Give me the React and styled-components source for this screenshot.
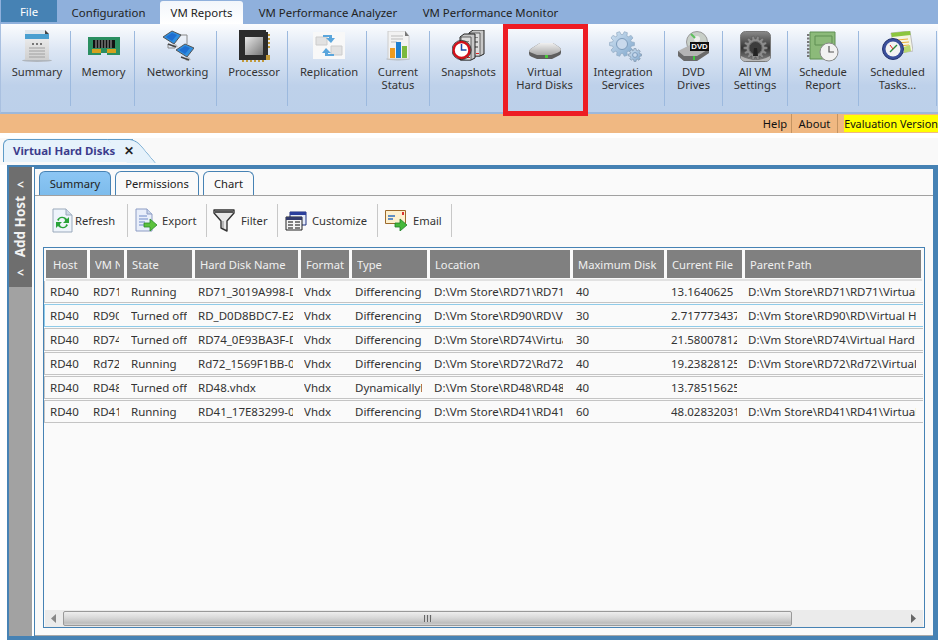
import React from 'react';
import styled, { createGlobalStyle } from 'styled-components';

const Global = createGlobalStyle`
  html, body { margin: 0; padding: 0; background: #fff; }
  * { box-sizing: border-box; }
  body { font-family: "Noto Sans", "Open Sans", "Liberation Sans", sans-serif; font-size: 11.5px; color: #333; }
`;

const Page = styled.div`
  width: 938px; height: 640px; overflow: hidden; display: flex; flex-direction: column; background: #fff;
`;
const MenuBar = styled.div`
  height: 24px; flex: none; background: #8fb0dc; display: flex; align-items: stretch; padding-left: 1px;
`;
const FileTab = styled.div`
  width: 56px; height: 22px; background: #4682b4; color: #fff; display: flex; align-items: center; justify-content: center; font-size: 11.4px;
`;
const MenuTab = styled.div`
  margin-top: 1px; border-radius: 3px 3px 0 0; display: flex; align-items: center; justify-content: center; font-size: 11.4px; color: #222;
  width: ${p => p.$w}px;
  background: ${p => p.$active ? 'linear-gradient(#f2f6fb, #fff)' : 'transparent'};
`;
const Ribbon = styled.div`
  height: 90px; flex: none; display: flex; align-items: flex-start; padding: 7px 0 0 3px;
  background: linear-gradient(#fbfcfe 0%, #dce6f4 30%, #bed1ea 70%, #bcd0ea 100%);
  border-left: 1px solid #a9c0e0; border-bottom: 2px solid #9db8da;
`;
const RibbonItem = styled.div`
  position: relative; height: 75px; width: ${p => p.$w}px; flex: none;
  display: flex; flex-direction: column; align-items: center;
  padding-left: ${p => p.$shift || 0}px;
  border-right: 1px solid ${p => p.$plain ? 'transparent' : '#9cb9de'};
  color: #333; font-size: 11.2px; line-height: 13px; text-align: center;
`;
const RibbonIcon = styled.div`
  height: 32px; margin-top: -1px; margin-bottom: 3px; display: flex; align-items: center; justify-content: center;
`;
const RibbonLabel = styled.div`
  margin-right: ${p => p.$nudge || 0}px;
`;
const Highlight = styled.div`
  position: absolute; left: 0; top: -7px; width: 85px; height: 92px; border: 5px solid #ed1c24; pointer-events: none;
`;
const StatusBar = styled.div`
  height: 19px; flex: none; background: #f0b882; display: flex; justify-content: flex-end; align-items: stretch; font-size: 11.2px; color: #111;
`;
const StatusLink = styled.div`
  display: flex; align-items: center; justify-content: center; width: ${p => p.$w}px; border-right: 1px solid #c49462;
`;
const EvalTag = styled.div`
  display: flex; align-items: center; justify-content: center; width: 94px; margin: 1px 0 1px 6px; background: #ffff00; color: #111; font-size: 10.8px; white-space: nowrap;
`;
const DocStrip = styled.div`
  height: 32px; flex: none; background: linear-gradient(#fff 0, #fff 5px, #f9f9f9 5px); padding: 6px 0 0 3px;
`;
const DocTab = styled.div`
  position: relative; width: 130px; height: 23px; background: #e6f2fb; border: 1px solid #5f9cc8; border-right: 0; border-bottom: 0;
  border-radius: 6px 0 0 0; display: flex; align-items: center; padding: 0 0 1px 9px; gap: 9px;
  font-weight: 700; color: #3c3c8c; font-size: 11.4px; white-space: nowrap;
  &::after {
    content: ""; position: absolute; right: -13px; top: -1px; width: 28px; height: 23px; background: #e6f2fb;
    border-top: 1px solid #5f9cc8; border-right: 1px solid #5f9cc8; border-radius: 0 7px 0 0; transform: skewX(40deg); z-index: 0;
  }
`;
const DocTitle = styled.span`
  position: relative; z-index: 1;
`;
const DocClose = styled.span`
  position: relative; z-index: 1; color: #222; font-size: 11.5px;
`;
const Frame = styled.div`
  flex: 1; min-height: 0; margin-left: 7px; display: flex; background: #4682b4; padding: 2px 5px 4px 2px;
`;
const SideBar = styled.div`
  width: 25px; flex: none; background: #a2a2a2; display: flex; flex-direction: column; border-right: 2px solid #fff;
`;
const SideHead = styled.div`
  height: 120px; background: #6e6e6e; color: #f2f2f2; display: flex; align-items: center; justify-content: space-between; flex-direction: column; padding: 12px 0 8px;
  font-weight: 700; font-size: 13.5px;
`;
const SideChevron = styled.span`
  line-height: 12px; font-size: 12px;
`;
const SideLabel = styled.span`
  writing-mode: vertical-rl; transform: rotate(180deg); line-height: 1; white-space: nowrap; margin-bottom: 4px;
`;
const Main = styled.div`
  flex: 1; min-width: 0; margin-left: 1px; margin-top: 2px; display: flex; flex-direction: column; background: #fafafa;
  border-bottom: 1px solid #a8a8a8;
`;
const SubTabs = styled.div`
  height: 27px; flex: none; display: flex; gap: 4px; padding: 2px 0 0 4px; border-bottom: 1px solid #a0a0a0;
`;
const SubTab = styled.div`
  width: ${p => p.$w}px; border: 1px solid #4682b4; border-bottom: 0; border-radius: 6px 6px 0 0; font-size: 11.2px; padding-bottom: 1px;
  display: flex; align-items: center; justify-content: center; color: #222;
  background: ${p => p.$active ? 'linear-gradient(#8cc6f4, #7dbcec)' : '#fafafa'};
`;
const Toolbar = styled.div`
  height: 51px; flex: none; display: flex; align-items: center; padding: 0 0 2px 13px; font-size: 11.2px; color: #333;
`;
const ToolItem = styled.div`
  width: ${p => p.$w}px; height: 33px; flex: none; display: flex; align-items: center; gap: ${p => p.$gap}px; border-right: 1px solid #c8c8c8; padding-left: ${p => p.$pad}px; white-space: nowrap;
`;
const TableFrame = styled.div`
  flex: 1; min-height: 0; margin: 0 8px 7px 8px; border: 1px solid #4682b4; padding: 2px 2px 0 2px; display: flex; flex-direction: column; background: #fafafa;
`;
const HeaderRow = styled.div`
  display: grid; grid-template-columns: 41px 34px 65px 103px 48px 75px 140px 91px 75px 176px; column-gap: 3px; flex: none;
  height: 31px; border-bottom: 2px solid #e2e2e2; padding-bottom: 1px;
`;
const HeadCell = styled.div`
  background: #808080; color: #f0f0f0; font-size: 11.2px; line-height: 30px; padding-left: ${p => p.$first ? 7 : 5}px; overflow: hidden; white-space: nowrap;
`;
const HeadText = styled.div`
  overflow: hidden; margin-right: 4px;
`;
const Rows = styled.div`
  flex: 1; min-height: 0; margin-left: -2px; margin-right: -1px;
`;
const Row = styled.div`
  display: grid; grid-template-columns: 41px 34px 65px 103px 48px 75px 140px 91px 75px 176px; column-gap: 3px;
  height: ${p => p.$first ? 22 : 23}px; margin-bottom: 1px; padding-left: 1px; align-items: center;
  border: 1px solid ${p => p.$blue ? '#8fcbe9' : '#c4c4c4'};
  border-top: ${p => p.$first ? 'none' : undefined}; border-right: 0;
  font-size: 11.5px; color: #333;
`;
const Cell = styled.div`
  overflow: hidden; white-space: nowrap; margin: 0 ${p => p.$right}px 0 ${p => p.$left}px;
`;
const ScrollBar = styled.div`
  height: 17px; flex: none; margin: 0 -1px 0 -1px; background: #ebebeb; display: flex; align-items: center; padding-bottom: 1px;
`;
const ScrollArrow = styled.div`
  width: 18px; flex: none; display: flex; justify-content: center; align-items: center;
`;
const ScrollThumb = styled.div`
  width: 729px; height: 15px; border: 1px solid #999; border-radius: 2px; background: linear-gradient(#eeeeee, #d8d8d8 45%, #bdbdbd 85%, #d4d4d4); display: flex; align-items: center; justify-content: center;
`;
const Grip = styled.div`
  width: 8px; height: 7px; background: repeating-linear-gradient(90deg, #666 0 1px, #d0d0d0 1px 3px);
`;
const ScrollEnd = styled.div`
  margin-left: auto; width: 18px; display: flex; justify-content: center;
`;

const gearPath = (cx, cy, ro, ri, n) => {
  const pts = [];
  const step = (Math.PI * 2) / n;
  for (let i = 0; i < n; i++) {
    const a = i * step;
    [[-0.3, ri], [-0.17, ro], [0.17, ro], [0.3, ri]].forEach(([o, r]) => {
      pts.push(`${(cx + Math.cos(a + o * step * 1.2) * r).toFixed(2)} ${(cy + Math.sin(a + o * step * 1.2) * r).toFixed(2)}`);
    });
  }
  return `M${pts.join('L')}z`;
};

const SummaryIcon = () => (
  <svg width="32" height="33" viewBox="0 0 32 33">
    <defs><linearGradient id="sm1" x1="0" y1="0" x2="0" y2="1"><stop offset="0" stopColor="#f4f4f4" /><stop offset="1" stopColor="#cfcfcf" /></linearGradient></defs>
    <ellipse cx="16" cy="30.5" rx="15" ry="1.5" fill="#9a9a9a" opacity=".6" />
    <path d="M4 0h20l4 4v26H4z" fill="url(#sm1)" />
    <path d="M4 4h24v5H4z" fill="#4a9fd0" /><path d="M4 0h20v4H4z" fill="#dfe6ec" />
    <path d="M24 0l4 4h-4z" fill="#444" />
    <path d="M11 13h2v2h-2zM15 13h2v2h-2zM19 13h2v2h-2z" fill="#777" />
    <path d="M8 18h16M8 21h16M8 24h16M8 27h16" stroke="#a0a0a0" strokeWidth="1" />
  </svg>
);
const MemoryIcon = () => (
  <svg width="32" height="19" viewBox="0 0 32 19">
    <path d="M0 0h32v18H19v-2h-6v2H0z" fill="#2b8f61" />
    <path d="M4 12h9v4h6v-4h9v4h-9v0h-6v0H4z" fill="#d4a11e" />
    <path d="M5 3h22v8H5z" fill="#111" />
    <path d="M8 3v8M11 3v8M14 3v8M17 3v8M20 3v8M23 3v8" stroke="#a8a8a8" strokeWidth="1" />
  </svg>
);
const Monitor = ({ x, y }) => (
  <g transform={`translate(${x} ${y})`}>
    <path d="M0 6L9 0l9 4-7 9z" fill="#2f8fe0" stroke="#555" strokeWidth="1" />
    <path d="M3 6l6-4 5 2-5 6z" fill="#1f6fd0" />
    <path d="M9 14l4-1 2 3-5 1z" fill="#bbb" />
    <path d="M5 13l8 3" stroke="#444" strokeWidth="1.5" />
  </g>
);
const NetworkIcon = () => (
  <svg width="32" height="32" viewBox="0 0 32 32">
    <path d="M14 5h11v9M6 14v4h7" fill="none" stroke="#888" strokeWidth="1" />
    <Monitor x={1} y={1} /><Monitor x={14} y={14} />
  </svg>
);
const ProcessorIcon = () => (
  <svg width="33" height="33" viewBox="0 0 33 33">
    <defs><linearGradient id="cp1" x1="0" y1="0" x2="1" y2="1"><stop offset="0" stopColor="#e8e8e8" /><stop offset="1" stopColor="#777" /></linearGradient></defs>
    <path d="M1 0h27v2h2v28H1z" fill="#2c2c2c" />
    <path d="M7 7h18v18H7z" fill="url(#cp1)" />
    <path d="M30 4h2v2h-2zM30 8h2v2h-2zM30 12h2v2h-2zM30 16h2v2h-2zM28 25h4v5h-4zM4 30h2v2H4zM8 30h2v2H8zM12 30h2v2h-2zM16 30h2v2h-2zM20 30h2v2h-2zM24 30h2v2h-2z" fill="#c29a3a" />
  </svg>
);
const ReplicationIcon = () => (
  <svg width="34" height="30" viewBox="0 0 34 30">
    <path d="M1 1h32v27H1z" fill="#f8f8f8" />
    <path d="M4 6h11v8H4zM19 15h11v9H19z" fill="#e2e2e2" stroke="#ccc" />
    <path d="M11 4h9v3h3l-4 5-5-5h3V6h-6z" fill="#5ba6dc" />
    <path d="M22 25h-9v-3h-3l4-5 5 5h-3v1h6z" fill="#5ba6dc" />
  </svg>
);
const StatusIcon = () => (
  <svg width="25" height="30" viewBox="0 0 25 30">
    <ellipse cx="12" cy="28" rx="12" ry="1.5" fill="#a0a0a0" opacity=".6" />
    <path d="M2 0h17l4 5v23H2z" fill="#f2f2f2" stroke="#ccc" />
    <path d="M19 0l4 5h-4z" fill="#777" />
    <path d="M5 5h12M5 8h12M5 11h6" stroke="#bbb" />
    <path d="M4 17h5v10H4z" fill="#ef9b1e" /><path d="M10 11h5v16h-5z" fill="#1f7fd0" /><path d="M16 15h5v12h-5z" fill="#7bb93c" />
  </svg>
);
const ServerBox = ({ x, y }) => (
  <g transform={`translate(${x} ${y})`}>
    <path d="M0 3L4 0h11v24l-4 2H0z" fill="#c8c8c8" stroke="#222" strokeWidth="1" />
    <path d="M1 3h10v23H1z" fill="#dedede" stroke="#444" strokeWidth=".8" />
    <path d="M3 7h6v1H3zM3 11h6v2H3zM3 16h6v2H3z" fill="#888" />
    <path d="M3 7h1v1H3z" fill="#3b3" /><path d="M7 23h3v1H7z" fill="#d22" />
  </g>
);
const SnapshotIcon = () => (
  <svg width="33" height="32" viewBox="0 0 33 32">
    <ServerBox x={17} y={0} /><ServerBox x={8} y={4} />
    <circle cx="9.5" cy="20" r="8" fill="#fff" stroke="#d3101a" strokeWidth="2.5" />
    <circle cx="9.5" cy="20" r="9.6" fill="none" stroke="#222" strokeWidth=".8" />
    <path d="M9.5 14v6h5" fill="none" stroke="#1c4aa8" strokeWidth="1.5" />
  </svg>
);
const DiskIcon = () => (
  <svg width="32" height="32" viewBox="0 -13 32 32">
    <defs><linearGradient id="dk1" x1="0" y1="0" x2="0" y2="1"><stop offset="0" stopColor="#f0f0f0" /><stop offset="1" stopColor="#a8a8a8" /></linearGradient></defs>
    <path d="M0 8q1-2 3-3L11 0h13l6 4q2 1 2 3v3q0 2-3 3l-6 3H8l-5-2q-3-1-3-3z" fill="#5f5f5f" />
    <path d="M0 8q1-2 3-3L11 0h13l6 4q2 1 2 3-1 2-4 3l-6 2H8l-5-2q-3-1-3-2z" fill="url(#dk1)" />
    <path d="M16 12h3v3h-3z" fill="#49c83a" />
  </svg>
);
const IntegrationIcon = () => (
  <svg width="33" height="31" viewBox="0 0 33 31">
    <defs><linearGradient id="ig1" x1="0" y1="0" x2="1" y2="1"><stop offset="0" stopColor="#d4e4f3" /><stop offset="1" stopColor="#7ea6cc" /></linearGradient></defs>
    <path d={gearPath(13, 13, 12.5, 9.5, 10)} fill="url(#ig1)" stroke="#8fa9c2" strokeWidth=".7" />
    <circle cx="13" cy="13" r="5.5" fill="#c9d9ec" stroke="#7d9cbc" />
    <path d={gearPath(26, 24, 6.5, 4.8, 8)} fill="url(#ig1)" stroke="#7f95ab" strokeWidth=".7" />
    <circle cx="26" cy="24" r="2.4" fill="#c9d9ec" stroke="#7d9cbc" />
  </svg>
);
const DvdIcon = () => (
  <svg width="31" height="31" viewBox="0 0 31 31">
    <circle cx="19" cy="11" r="10.5" fill="#c8cfc8" stroke="#999" />
    <circle cx="19" cy="8" r="3" fill="#eee" />
    <path d="M13 3l4 4" stroke="#5cc05c" strokeWidth="2" />
    <path d="M0 20l12-6h14l5 4v4l-12 8H6l-6-5z" fill="#b4b4b4" />
    <path d="M0 20l6 5h13l12-7v4l-12 8H6l-6-5z" fill="#6a6a6a" />
    <path d="M12 11h19v9H12z" fill="#111" />
    <text x="21.5" y="18.4" textAnchor="middle" fontFamily="Liberation Sans, sans-serif" fontWeight="700" fontSize="7.8" fill="#fff">DVD</text>
    <path d="M15 25h2v4h-2z" fill="#3fc83f" />
  </svg>
);
const SettingsIcon = () => (
  <svg width="31" height="31" viewBox="0 0 31 31">
    <defs><linearGradient id="st1" x1="0" y1="0" x2="0" y2="1"><stop offset="0" stopColor="#8a8a8a" /><stop offset=".55" stopColor="#333" /><stop offset="1" stopColor="#8a8a8a" /></linearGradient></defs>
    <rect x="0.5" y="0.5" width="30" height="30" rx="5" fill="url(#st1)" stroke="#777" />
    <path d={gearPath(15.5, 17, 12, 9, 14)} fill="#8c8c8c" stroke="#555" strokeWidth=".5" />
    <circle cx="15.5" cy="17" r="6.5" fill="#3c3c3c" stroke="#666" />
    <path d="M14 17h3l1 8h-5z" fill="#222" />
    <path d="M1 25q15 8 29 0v2q0 3-4 3H5q-4 0-4-3z" fill="#cfcfcf" opacity=".7" />
  </svg>
);
const ScheduleIcon = () => (
  <svg width="33" height="31" viewBox="0 0 33 31">
    <path d="M3 1h25v27H3z" fill="#8cba7a" stroke="#5f8f52" />
    <path d="M8 5h17v9H8z" fill="none" stroke="#5f8f52" />
    <path d="M1 3v23" stroke="#777" strokeWidth="3" strokeDasharray="2 1.5" />
    <circle cx="22" cy="21" r="9" fill="#f2f2f2" stroke="#8a8a8a" />
    <path d="M22 15v6h5" fill="none" stroke="#555" strokeWidth="1.2" />
  </svg>
);
const TasksIcon = () => (
  <svg width="31" height="30" viewBox="0 0 31 30">
    <path d="M9 2L28 0l3 20-18 3z" fill="#f5f5e4" stroke="#bbb" />
    <path d="M9 2L28 0l.6 4L10 6z" fill="#8cc63f" />
    <path d="M15 9l11-1M15 12l12-1M17 15l10-1M18 18l10-1" stroke="#e8b23c" />
    <path d="M22 22l7-2-1-6-6 2z" fill="#b8d86e" />
    <circle cx="11" cy="18" r="10.5" fill="#3a4f9c" stroke="#24336e" />
    <circle cx="11" cy="18" r="7.5" fill="#f2f2f2" />
    <path d="M11 18l4-4M11 18l-3 3" stroke="#2a8a3a" strokeWidth="1.4" /><path d="M11 18l-3-4" stroke="#d22" strokeWidth="1" />
  </svg>
);
const RefreshIcon = () => (
  <svg width="21" height="25" viewBox="0 0 21 25">
    <path d="M1 1h13l6 6v17H1z" fill="#eef4fb" stroke="#9aa9bb" />
    <path d="M14 1v6h6" fill="#cdd9e6" stroke="#9aa9bb" />
    <path d="M5 12a6 6 0 0 1 10-1l2-2v6h-6l2-2a3 3 0 0 0-6 0z" fill="#2aa33a" />
    <path d="M16 17a6 6 0 0 1-10 1l-2 2v-6h6l-2 2a3 3 0 0 0 6 0z" fill="#2aa33a" />
  </svg>
);
const ExportIcon = () => (
  <svg width="23" height="25" viewBox="0 0 23 25">
    <path d="M1 1h11l5 5v17H1z" fill="#e8eefa" stroke="#8c9cc4" />
    <path d="M12 1v5h5" fill="#c9d5ea" stroke="#8c9cc4" />
    <path d="M4 8h8M4 11h9M4 14h6M4 17h5" stroke="#6f8ac8" />
    <path d="M9 15h6v-4l7 6-7 6v-4H9z" fill="#5cc23c" stroke="#2c8a2c" strokeWidth=".8" />
  </svg>
);
const FilterIcon = () => (
  <svg width="22" height="23" viewBox="0 0 22 23">
    <path d="M1 1h20v3l-7 8v10l-6-3v-7L1 4z" fill="#e8e8e8" stroke="#333" strokeWidth="1.4" strokeLinejoin="round" />
    <path d="M2 3h18" stroke="#555" strokeWidth="2" />
    <path d="M10 12v7" stroke="#aaa" strokeWidth="1.6" />
  </svg>
);
const CustomizeIcon = () => (
  <svg width="22" height="20" viewBox="0 0 22 20">
    <path d="M5 1h16v13H5z" fill="#e4ebfa" stroke="#1f2f7c" /><path d="M5 1h16v3H5z" fill="#2b3f9c" />
    <path d="M1 6h16v13H1z" fill="#f4f4f4" stroke="#222" /><path d="M1 6h16v3H1z" fill="#333b6c" />
    <path d="M3 11h5M3 14h5M3 17h5M10 11h5M10 14h5M10 17h5" stroke="#555" strokeWidth="1.6" />
  </svg>
);
const EmailIcon = () => (
  <svg width="22" height="21" viewBox="0 0 22 21">
    <path d="M0.5 0.5h20v13h-20z" fill="#fdf0cf" stroke="#9c6a2c" />
    <path d="M3 6h7M3 9h5" stroke="#2f6fc0" strokeWidth="1.4" /><path d="M17 2h2v3h-2z" fill="#d33" />
    <path d="M10 13h5v-4l7 6-7 6v-4h-5z" fill="#46b83a" stroke="#1f7f2a" strokeWidth=".8" />
  </svg>
);

const ribbon = [
  { w: 67, label: ['Summary'], Icon: SummaryIcon },
  { w: 64, shift: 2, label: ['Memory'], Icon: MemoryIcon },
  { w: 82, shift: 4, label: ['Networking'], Icon: NetworkIcon },
  { w: 71, shift: 4, label: ['Processor'], Icon: ProcessorIcon },
  { w: 79, shift: 4, label: ['Replication'], Icon: ReplicationIcon },
  { w: 63, label: ['Current', 'Status'], Icon: StatusIcon },
  { w: 73, shift: 5, label: ['Snapshots'], Icon: SnapshotIcon, plain: true },
  { w: 84, label: ['Virtual', 'Hard Disks'], Icon: DiskIcon, plain: true, marked: true },
  { w: 78, nudge: 5, label: ['Integration', 'Services'], Icon: IntegrationIcon },
  { w: 58, label: ['DVD', 'Drives'], Icon: DvdIcon },
  { w: 65, label: ['All VM', 'Settings'], Icon: SettingsIcon },
  { w: 71, label: ['Schedule', 'Report'], Icon: ScheduleIcon },
  { w: 78, label: ['Scheduled', 'Tasks...'], Icon: TasksIcon },
];

const tools = [
  { w: 80, pad: 4, gap: 2, label: 'Refresh', Icon: RefreshIcon },
  { w: 79, pad: 7, gap: 4, label: 'Export', Icon: ExportIcon },
  { w: 71, pad: 6, gap: 6, label: 'Filter', Icon: FilterIcon },
  { w: 100, pad: 7, gap: 5, label: 'Customize', Icon: CustomizeIcon },
  { w: 74, pad: 7, gap: 6, label: 'Email', Icon: EmailIcon },
];

const headers = ['Host', 'VM Name', 'State', 'Hard Disk Name', 'Format', 'Type', 'Location', 'Maximum Disk', 'Current File', 'Parent Path'];
const cellLeft = [4, 3, 4, 3, 3, 3, 4, 3, 4, 3];
const rows = [
  ['RD40', 'RD71', 'Running', 'RD71_3019A998-D', 'Vhdx', 'Differencing', 'D:\\Vm Store\\RD71\\RD71\\Virtual', '40', '13.1640625', 'D:\\Vm Store\\RD71\\RD71\\Virtual Hard'],
  ['RD40', 'RD90', 'Turned off', 'RD_D0D8BDC7-E2F', 'Vhdx', 'Differencing', 'D:\\Vm Store\\RD90\\RD\\Virtual', '30', '2.717773437', 'D:\\Vm Store\\RD90\\RD\\Virtual Hard Disks'],
  ['RD40', 'RD74', 'Turned off', 'RD74_0E93BA3F-D', 'Vhdx', 'Differencing', 'D:\\Vm Store\\RD74\\Virtual', '30', '21.58007812', 'D:\\Vm Store\\RD74\\Virtual Hard Disks'],
  ['RD40', 'Rd72', 'Running', 'Rd72_1569F1BB-0', 'Vhdx', 'Differencing', 'D:\\Vm Store\\RD72\\Rd72\\Virtual', '40', '19.23828125', 'D:\\Vm Store\\RD72\\Rd72\\Virtual Hard'],
  ['RD40', 'RD48', 'Turned off', 'RD48.vhdx', 'Vhdx', 'DynamicallyExpanding', 'D:\\Vm Store\\RD48\\RD48\\Virtual', '40', '13.78515625', ''],
  ['RD40', 'RD41', 'Running', 'RD41_17E83299-0', 'Vhdx', 'Differencing', 'D:\\Vm Store\\RD41\\RD41\\Virtual', '60', '48.02832031', 'D:\\Vm Store\\RD41\\RD41\\Virtual Hard'],
];

export default function App() {
  return (
    <Page>
      <Global />
      <MenuBar>
        <FileTab>File</FileTab>
        <MenuTab $w={103}>Configuration</MenuTab>
        <MenuTab $w={83} $active>VM Reports</MenuTab>
        <MenuTab $w={170}>VM Performance Analyzer</MenuTab>
        <MenuTab $w={155}>VM Performance Monitor</MenuTab>
      </MenuBar>
      <Ribbon>
        {ribbon.map(({ w, shift, nudge, label, Icon, plain, marked }) => (
          <RibbonItem key={label.join()} $w={w} $shift={shift} $plain={plain}>
            <RibbonIcon><Icon /></RibbonIcon>
            {label.map(l => <RibbonLabel key={l} $nudge={nudge}>{l}</RibbonLabel>)}
            {marked && <Highlight />}
          </RibbonItem>
        ))}
      </Ribbon>
      <StatusBar>
        <StatusLink $w={33}>Help</StatusLink>
        <StatusLink $w={46}>About</StatusLink>
        <EvalTag>Evaluation Version</EvalTag>
      </StatusBar>
      <DocStrip>
        <DocTab>
          <DocTitle>Virtual Hard Disks</DocTitle>
          <DocClose>✕</DocClose>
        </DocTab>
      </DocStrip>
      <Frame>
        <SideBar>
          <SideHead>
            <SideChevron>&lt;</SideChevron>
            <SideLabel>Add Host</SideLabel>
            <SideChevron>&lt;</SideChevron>
          </SideHead>
        </SideBar>
        <Main>
          <SubTabs>
            <SubTab $w={72} $active>Summary</SubTab>
            <SubTab $w={84}>Permissions</SubTab>
            <SubTab $w={51}>Chart</SubTab>
          </SubTabs>
          <Toolbar>
            {tools.map(({ w, pad, gap, label, Icon }) => (
              <ToolItem key={label} $w={w} $pad={pad} $gap={gap}><Icon />{label}</ToolItem>
            ))}
          </Toolbar>
          <TableFrame>
            <HeaderRow>
              {headers.map((h, i) => <HeadCell key={h} $first={i === 0}><HeadText>{h}</HeadText></HeadCell>)}
            </HeaderRow>
            <Rows>
              {rows.map((r, i) => (
                <Row key={i} $blue={i === 1} $first={i === 0}>
                  {r.map((c, j) => <Cell key={j} $left={cellLeft[j]} $right={j === 6 ? 7 : 5}>{c}</Cell>)}
                </Row>
              ))}
            </Rows>
            <ScrollBar>
              <ScrollArrow><svg width="6" height="9" viewBox="0 0 6 9"><path d="M5 0v9L0 4.5z" fill="#888" /></svg></ScrollArrow>
              <ScrollThumb><Grip /></ScrollThumb>
              <ScrollEnd><svg width="6" height="9" viewBox="0 0 6 9"><path d="M0 0v9l5-4.5z" fill="#666" /></svg></ScrollEnd>
            </ScrollBar>
          </TableFrame>
        </Main>
      </Frame>
    </Page>
  );
}
